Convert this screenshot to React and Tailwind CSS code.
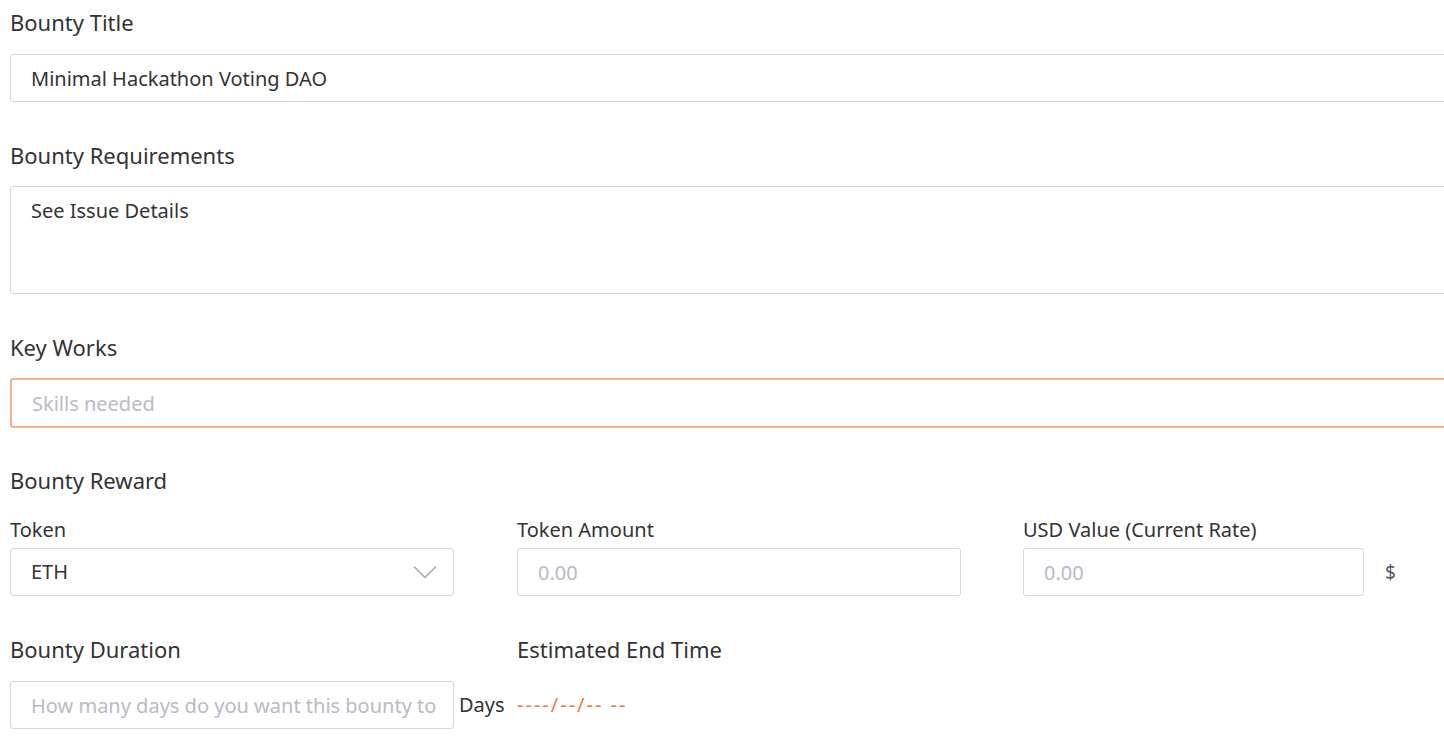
const font = { fontFamily: '"Noto Sans", "Open Sans", sans-serif' };

const Label = ({ children, className = '' }) => (
    <div className={`text-[22px] leading-[28px] text-[#333333] ${className}`}>{children}</div>
);

const SubLabel = ({ children }) => (
    <div className="text-[20px] leading-[24px] text-[#333333]">{children}</div>
);

const inputCls = 'h-[48px] px-[20px] border border-[#d6d6dc] rounded-[3px] text-[20px] text-[#333333] placeholder:text-[#b9bac6] outline-none bg-white';

const App = () => {
    return (
        <div className="w-[1444px] h-[754px] overflow-hidden bg-white" style={font}>
            <div className="w-[1500px] pl-[10px] pt-[8px]">
                <Label>Bounty Title</Label>
                <input className={`mt-[18px] w-full block ${inputCls}`} defaultValue="Minimal Hackathon Voting DAO" />

                <Label className="mt-[39px]">Bounty Requirements</Label>
                <textarea
                    className="mt-[17px] block w-full h-[108px] px-[20px] pt-[10px] border border-[#d6d6dc] rounded-[3px] text-[20px] leading-[28px] text-[#333333] outline-none resize-none"
                    defaultValue="See Issue Details"
                />

                <Label className="mt-[39px]">Key Works</Label>
                <input
                    className="mt-[17px] block w-full h-[50px] px-[20px] border-2 border-[#f5b08c] rounded-[3px] text-[20px] placeholder:text-[#b9bac6] outline-none"
                    placeholder="Skills needed"
                />

                <Label className="mt-[38px]">Bounty Reward</Label>
                <div className="mt-[24px] flex">
                    <div className="w-[507px]">
                        <SubLabel>Token</SubLabel>
                        <div className="mt-[6px] w-[444px] h-[48px] flex items-center justify-between pl-[20px] pr-[16px] border border-[#d6d6dc] rounded-[3px] text-[20px] text-[#333333]">
                            ETH
                            <svg width="24" height="14" viewBox="0 0 24 14" fill="none" stroke="#a3a3ad" strokeWidth="1.4">
                                <polyline points="1,1.5 12,12.5 23,1.5" />
                            </svg>
                        </div>
                    </div>
                    <div className="w-[506px]">
                        <SubLabel>Token Amount</SubLabel>
                        <input className={`mt-[6px] block w-[444px] ${inputCls}`} placeholder="0.00" />
                    </div>
                    <div>
                        <SubLabel>USD Value (Current Rate)</SubLabel>
                        <div className="mt-[6px] flex items-center">
                            <input className={`w-[341px] ${inputCls}`} placeholder="0.00" />
                            <span className="ml-[21px] text-[19px] text-[#555555]">$</span>
                        </div>
                    </div>
                </div>

                <div className="mt-[39px] flex">
                    <Label className="w-[507px]">Bounty Duration</Label>
                    <Label>Estimated End Time</Label>
                </div>
                <div className="mt-[18px] flex items-center">
                    <input
                        className={`w-[444px] pr-[12px] ${inputCls}`}
                        placeholder="How many days do you want this bounty to last?"
                    />
                    <span className="ml-[5px] w-[58px] text-[20px] text-[#333333]">Days</span>
                    <span className="text-[20px] tracking-[2px] text-[#f07a3a]">----/--/-- --</span>
                </div>
            </div>
        </div>
    );
};

export default App;
